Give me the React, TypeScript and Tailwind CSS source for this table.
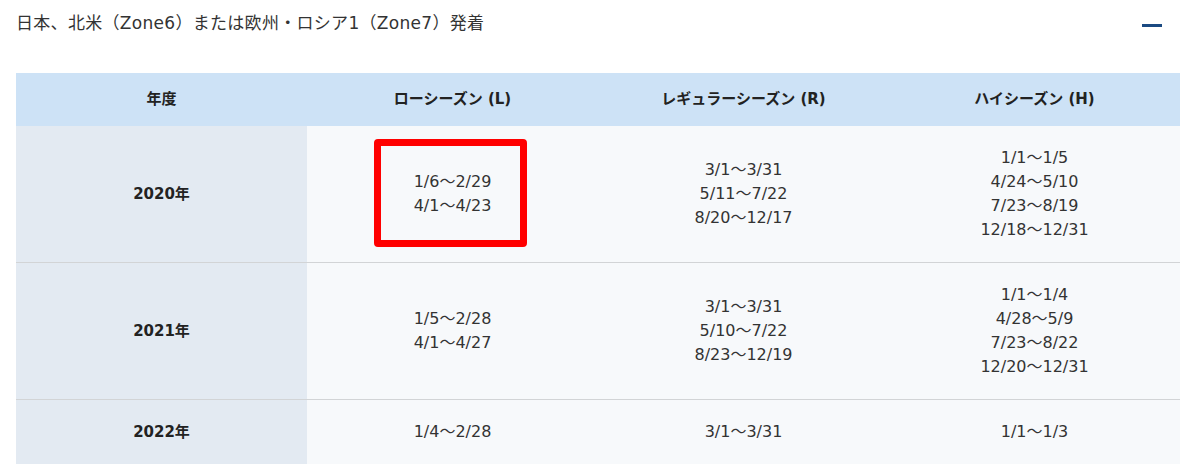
import React from "react";

const rows = [
  {
    year: "2020年",
    low: ["1/6～2/29", "4/1～4/23"],
    reg: ["3/1～3/31", "5/11～7/22", "8/20～12/17"],
    high: ["1/1～1/5", "4/24～5/10", "7/23～8/19", "12/18～12/31"],
    mark: true,
  },
  {
    year: "2021年",
    low: ["1/5～2/28", "4/1～4/27"],
    reg: ["3/1～3/31", "5/10～7/22", "8/23～12/19"],
    high: ["1/1～1/4", "4/28～5/9", "7/23～8/22", "12/20～12/31"],
    mark: false,
  },
  {
    year: "2022年",
    low: ["1/4～2/28"],
    reg: ["3/1～3/31"],
    high: ["1/1～1/3"],
    mark: false,
  },
];

const font = { fontFamily: '"DejaVu Sans", "Noto Sans CJK JP", sans-serif' };

function Lines({ items }: { items: string[] }) {
  return (
    <>
      {items.map((t) => (
        <div key={t}>{t}</div>
      ))}
    </>
  );
}

export default function App() {
  return (
    <div className="w-[1200px] h-[473px] bg-white overflow-hidden" style={font}>
      <div className="flex items-center justify-between pl-4 pr-[38px] pt-[10px] h-[36px]">
        <div className="text-[17px] leading-[26px] text-[#333] tracking-[0.3px]">
          日本、北米（Zone6）または欧州・ロシア1（Zone7）発着
        </div>
        <div className="w-[20px] h-[3px] bg-[#1b4a82] mt-[4px]" />
      </div>
      <table className="ml-4 mt-[37px] w-[1164px] table-fixed border-collapse text-center">
        <thead>
          <tr className="bg-[#cde2f6] h-[53px]">
            {["年度", "ローシーズン (L)", "レギュラーシーズン (R)", "ハイシーズン (H)"].map((h) => (
              <th key={h} className="w-[291px] p-0 text-[15px] font-bold text-[#222]">
                {h}
              </th>
            ))}
          </tr>
        </thead>
        <tbody>
          {rows.map((r, i) => (
            <tr key={r.year} className={i > 0 ? "border-t border-[#d2d4d6]" : ""}>
              <td className="bg-[#e3eaf2] py-5 text-[15px] font-bold text-[#222] leading-[24px]">{r.year}</td>
              <td className="bg-[#f7f9fb] py-5 text-[16px] leading-[24px] text-[#333] relative">
                <Lines items={r.low} />
                {r.mark && (
                  <div className="absolute left-[67px] top-[13px] w-[153px] h-[108px] border-[7px] border-[#ff0000] rounded-[4px] pointer-events-none" />
                )}
              </td>
              <td className="bg-[#f7f9fb] py-5 text-[16px] leading-[24px] text-[#333]">
                <Lines items={r.reg} />
              </td>
              <td className="bg-[#f7f9fb] py-5 text-[16px] leading-[24px] text-[#333]">
                <Lines items={r.high} />
              </td>
            </tr>
          ))}
        </tbody>
      </table>
    </div>
  );
}
